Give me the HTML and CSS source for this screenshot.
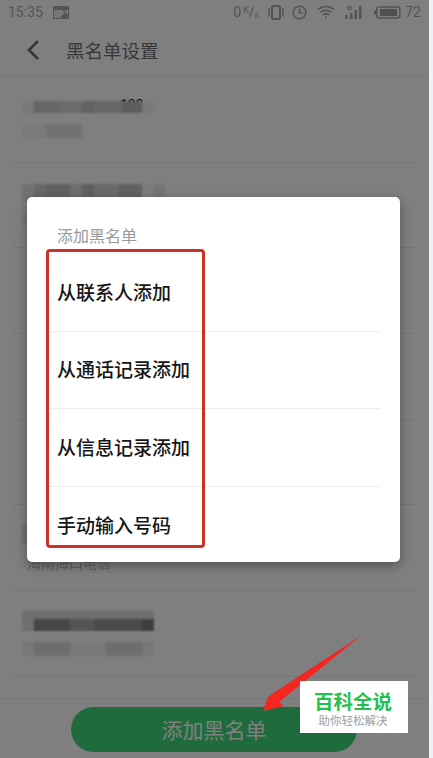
FILE: index.html
```html
<!DOCTYPE html>
<html lang="zh-CN">
<head>
  <meta charset="UTF-8" />
  <meta name="viewport" content="width=device-width, initial-scale=1.0"/>
  <title>黑名单设置</title>
  <link rel="stylesheet" href="styles.css">
</head>
<body>

  <div class="screen">

    <!-- Status bar -->
    <div class="status">
      <span class="time">15:35</span>
      <svg class="ic-pic" width="16" height="13" viewBox="0 0 16 13"><rect width="16" height="13" rx="1" fill="#a8a8a8"/><path d="M1 4h14v5l-3-3-5 6H1z" fill="#ededed"/><circle cx="11" cy="4" r="1.3" fill="#a8a8a8"/></svg>
      <span class="spacer"></span>
      <span class="speed">0<sup>K</sup>/<sub>s</sub></span>
      <svg width="16" height="15" viewBox="0 0 16 15" fill="none" stroke="#a8a8a8"><rect x="4" y="1" width="8" height="13" rx="1" stroke-width="2"/><path d="M1 3.5v8M15 3.5v8" stroke-width="1.5"/></svg>
      <svg class="ic-clock" width="15" height="15" viewBox="0 0 15 15" fill="none" stroke="#a8a8a8" stroke-width="1.6"><circle cx="7.5" cy="7.5" r="6.3"/><path d="M7.5 3.5v4.2h3.3"/></svg>
      <svg width="18" height="14" viewBox="0 0 18 14" fill="none" stroke="#a8a8a8" stroke-width="1.6"><path d="M1 4.5c4.500-4 11.500-4 16 0M3.500 7.300c3-2.600 8-2.600 11 0M6 10c1.700-1.300 4.300-1.300 6 0"/><circle cx="9" cy="12.500" r="1" fill="#a8a8a8" stroke="none"/></svg>
      <svg class="ic-sig" width="18" height="14" viewBox="0 0 18 14" fill="#a8a8a8"><rect x="1" y="10" width="2.500" height="4"/><rect x="6" y="8" width="2.500" height="6"/><rect x="10.500" y="5" width="2.500" height="9"/><rect x="15" y="1" width="2.500" height="13"/><rect x="3" y="1" width="5" height="4" opacity=".6"/></svg>
      <svg class="ic-batt" width="27" height="13" viewBox="0 0 27 13" fill="none"><rect x="2.800" y="1" width="23" height="11" rx="2" stroke="#a8a8a8" stroke-width="1.600"/><rect x="0" y="4.500" width="2" height="4" fill="#a8a8a8"/><rect x="6" y="3" width="17" height="7" fill="#a0a0a0"/></svg>
      <span class="level">72</span>
    </div>

    <!-- Title bar -->
    <header class="topbar">
      <svg class="back" width="14" height="22" viewBox="0 0 14 22" fill="none" stroke="#6e6e6e" stroke-width="2.600"><path d="M12 2 3 11l9 9"/></svg>
      <h1>黑名单设置</h1>
    </header>

    <!-- Blocked numbers, blurred in the source -->
    <ul class="rows">
      <li class="row">
        <div class="name-wrap">
          <span class="peek">133</span>
          <div class="mosaic name m1"></div>
        </div>
        <div class="mosaic sub s1"></div>
      </li>
      <li class="row">
        <div class="mosaic name m2"></div>
        <div class="mosaic sub s1"></div>
      </li>
      <li class="row"></li>
      <li class="row"></li>
      <li class="row"></li>
      <li class="row">
        <div class="mosaic name m2"></div>
        <div class="place">海南海口电信</div>
      </li>
      <li class="row">
        <div class="mosaic name m3"></div>
        <div class="mosaic sub s2"></div>
      </li>
    </ul>

    <div class="bottom">
      <button class="add-btn">添加黑名单</button>
    </div>

    <div class="scrim"></div>

    <!-- Dialog -->
    <div class="dialog">
      <h2>添加黑名单</h2>
      <div class="item">从联系人添加</div>
      <div class="item">从通话记录添加</div>
      <div class="item">从信息记录添加</div>
      <div class="item last">手动输入号码</div>
      <div class="redbox"></div>
    </div>

    <!-- Annotation arrow -->
    <svg class="arrow" width="429" height="758" viewBox="0 0 429 758"><polygon points="362,635 272,694 268,697 263,711 284,706 279,702" fill="#f5251f"/></svg>

    <div class="mark">
      <div class="mark-top">百科全说</div>
      <div class="mark-sub">助你轻松解决</div>
    </div>

  </div>

</body>
</html>
```

FILE: styles.css
```css
html, body {
  margin: 0;
  padding: 0;
  background: #eef2f8;
}

body {
  font-family: "Noto Sans CJK SC", Roboto, sans-serif;
}

.screen {
  position: relative;
  width: 429px;
  height: 758px;
  overflow: hidden;
  background: #ffffff;
}

.status {
  display: flex;
  align-items: center;
  gap: 10px;
  height: 24px;
  padding: 0 8px;
  box-sizing: border-box;
  width: 429px;
  font-family: Roboto, sans-serif;
  font-size: 14px;
  color: #a8a8a8;
}

.spacer { flex: 1; }

.speed { margin-right: -1px; letter-spacing: 0; }
.speed sup { font-size: 9px; vertical-align: 4px; line-height: 0; margin-left: 2px; }
.speed sub { font-size: 9px; vertical-align: -1px; line-height: 0; }

.ic-clock { margin-left: -2px; }
.ic-sig { margin-left: -1px; }
.ic-batt { margin-left: 2px; margin-right: -6px; }

.topbar {
  display: flex;
  align-items: center;
  height: 53px;
  padding-left: 26px;
  box-sizing: border-box;
  border-bottom: 1px solid #f0f0f0;
  gap: 26px;
}

.topbar h1 {
  margin: 0;
  font-size: 18.500px;
  font-weight: 400;
  color: #707070;
}

.rows {
  list-style: none;
  margin: 0;
  padding: 0 12px;
}

.row {
  display: flex;
  flex-direction: column;
  justify-content: center;
  gap: 11px;
  height: 85.700px;
  box-sizing: border-box;
  padding-left: 10px;
  border-bottom: 1px solid #ededed;
}

.mosaic { filter: blur(1px); }

.name { height: 12px; }
.sub { height: 14px; }

.name-wrap { position: relative; }

.peek {
  position: absolute;
  left: 98px;
  top: -3px;
  font-family: Roboto, sans-serif;
  font-size: 14px;
  line-height: 14px;
  color: #000000;
}

.m1 {
  position: relative;
  width: 131px;
  background: linear-gradient(to right, #f0f0f0 0 12px, #cccccc 12px 36px, #d6d6d6 36px 60px, #c4c4c4 60px 72px, #d0d0d0 72px 100px, #bcbcbc 100px 120px, #f2f2f2 120px);
}

.m2 {
  width: 143px;
  height: 18px;
  background: linear-gradient(to right, #e4e4e4 0 12px, #d0d0d0 12px 24px, #c4c4c4 24px 48px, #dcdcdc 48px 60px, #c0c0c0 60px 72px, #d4d4d4 72px 96px, #c4c4c4 96px 120px, #f8f8f8 120px 132px, #eaeaea 132px);
}

.m3 {
  width: 132px;
  height: 20px;
  background: linear-gradient(to bottom, #dcdcdc 0 8px, transparent 8px), linear-gradient(to right, #e0e0e0 0 12px, #8c8c8c 12px 48px, #a8a8a8 48px 72px, #949494 72px 120px, #7c7c7c 120px);
}

.s1 {
  width: 60px;
  background: linear-gradient(to right, #f4f4f4 0 24px, #e4e4e4 24px 60px);
}

.s2 {
  width: 132px;
  background: linear-gradient(to right, #f0f0f0 0 12px, #dcdcdc 12px 48px, #f2f2f2 48px 84px, #dcdcdc 84px 120px, #f0f0f0 120px);
}

.place {
  margin-left: 5px;
  font-size: 14px;
  line-height: 16px;
  color: #c4c4c4;
  filter: blur(.5px);
}

.bottom {
  display: flex;
  justify-content: center;
  margin-top: 21px;
  padding-top: 8px;
  padding-right: 1px;
  border-top: 1px solid #f0f0f0;
}

.add-btn {
  width: 286px;
  height: 45px;
  border: none;
  border-radius: 23px;
  background: #3fd676;
  color: #ffffff;
  font-family: inherit;
  font-size: 21px;
  letter-spacing: 0;
}

.scrim {
  position: absolute;
  inset: 0;
  background: rgba(0,0,0,0.5);
}

.dialog {
  position: absolute;
  left: 27px;
  top: 197px;
  width: 373px;
  height: 365px;
  box-sizing: border-box;
  padding-top: 29px;
  background: #ffffff;
  border-radius: 5px;
  box-shadow: 0 4px 12px rgba(0,0,0,0.35);
}

.dialog h2 {
  margin: 0 0 10px 30px;
  font-size: 16px;
  line-height: 18px;
  font-weight: 400;
  color: #999999;
}

.item {
  display: flex;
  align-items: center;
  height: 77.500px;
  box-sizing: border-box;
  margin: 0 19px 0 23px;
  padding: 0 0 2px 7px;
  font-size: 19px;
  font-weight: 500;
  color: #161616;
  border-bottom: 1px solid #eeeeee;
}

.item.last { border-bottom: none; }

.redbox {
  position: absolute;
  left: 19px;
  top: 52px;
  width: 159px;
  height: 299px;
  box-sizing: border-box;
  border: 3px solid #cc3328;
  border-radius: 4px;
}

.arrow {
  position: absolute;
  left: 0;
  top: 0;
}

.mark {
  position: absolute;
  left: 300px;
  top: 681px;
  width: 106px;
  height: 52px;
  padding-right: 2px;
  background: #ffffff;
  text-align: center;
}

.mark-top {
  padding-top: 9px;
  font-size: 19.500px;
  line-height: 22px;
  font-weight: 700;
  color: #1fc24a;
}

.mark-sub {
  margin-top: 1px;
  font-size: 11.500px;
  line-height: 14px;
  color: #a0a0a0;
}
```
